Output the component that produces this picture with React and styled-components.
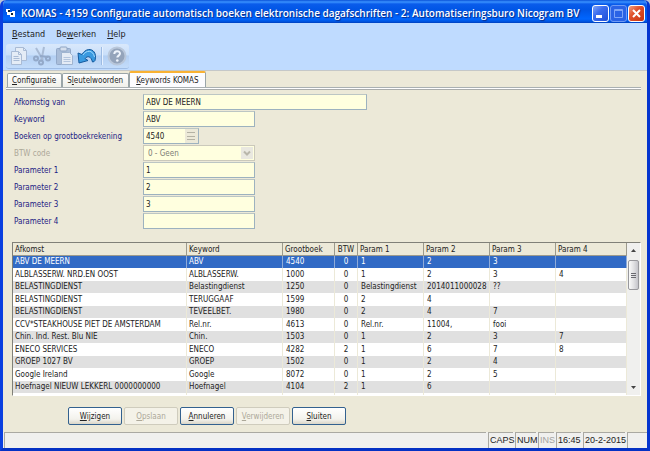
import React, { useState } from 'react';
import styled, { createGlobalStyle, css } from 'styled-components';

const ui = '"DejaVu Sans Condensed", "Noto Sans", sans-serif';

const GlobalStyle = createGlobalStyle`
* {
    box-sizing:border-box;
}

body {
    margin:0;
    background-color:#b9c4d8;
    font-family:${ui};
    font-size:8px;
    color:#222;
}

button, input, select {
    font:inherit;
    color:inherit;
    margin:0;
}
`;

const WindowStyled = styled.div`
display:flex;
flex-direction:column;
min-height:100vh;
border:3px solid #0a3fe0;
border-top:none;
border-bottom-color:#0531c4;
border-right-color:#0535cf;
border-radius:6px 6px 0 0;
background-color:#ece9d8;
overflow:hidden;
`;

const TitleBar = styled.header`
display:flex;
align-items:center;
height:23px;
margin:0 -3px;
padding:3px 5px 0 6px;
background:linear-gradient(#0a52d8 0, #3a92ff 2px, #0a5ceb 4px, #0055e5 10px, #0066ff 19px, #0050d8 22px, #003cb8 23px);
color:#fff;

h1 {
    flex:1;
    min-width:0;
    margin:0 0 0 6px;
    font-family:"Open Sans", "Noto Sans", sans-serif;
    font-size:10px;
    font-weight:600;
    line-height:16px;
    text-shadow:1px 1px 1px #0a2a80;
    white-space:nowrap;
}

> svg {
    flex:none;
}
`;

const CaptionButton = styled.button`
display:flex;
flex:none;
width:17px;
height:17px;
margin-left:1px;
padding:0;
border:1px solid ${props => (props.$faded ? '#6f9af5' : '#fff')};
border-radius:3px;
background:${props =>
    props.$close
        ? 'linear-gradient(135deg, #f0a080, #e0512c 40%, #c83410)'
        : props.$faded
            ? '#2a63e6'
            : 'linear-gradient(135deg, #7fa4f8, #3b6cee 40%, #2050d8)'};

svg {
    display:block;
    width:15px;
    height:15px;
}
`;

const MenuBar = styled.nav`
display:flex;
gap:11px;
padding:4px 9px 3px;
background-color:#bfdbff;
`;

const MenuItem = styled.button`
padding:0;
border:none;
background:none;
font-size:9px;
line-height:14px;
`;

const ToolBarRow = styled.div`
display:flex;
padding:0 3px 1px;
background-color:#bfdbff;
border-bottom:1px solid #c5c8c8;
`;

const ToolBar = styled.div`
display:flex;
align-items:center;
height:25px;
width:123px;
padding:0 1px;
border-radius:3px;
background:linear-gradient(#d9e8fb, #c9dffa 45%, #b3cff3 50%, #c3dcfa);
border-bottom:1px solid #9fbde6;
`;

const ToolButton = styled.button`
display:flex;
padding:0;
width:23px;
height:22px;
border:none;
background:none;

svg {
    display:block;
    width:23px;
    height:22px;
}
`;

const ToolDivider = styled.span`
width:2px;
height:18px;
margin:0 2px;
border-left:1px solid #9dbbe3;
border-right:1px solid #e6f1ff;
`;

const TabList = styled.div`
display:flex;
align-items:flex-end;
height:16px;
padding-left:4px;
`;

const Tab = styled.button`
height:14px;
padding:0 5px 0 4px;
border:1px solid #9aa5a8;
border-bottom:none;
border-radius:2px 2px 0 0;
background:linear-gradient(#fff, #f0f0ea);
line-height:13px;
white-space:nowrap;

${props => props.$active && css`
height:16px;
padding:0 6px;
border-top:2px solid #f9b233;
background:#fcfcfe;
`}
`;

const Page = styled.main`
flex:1;
display:flex;
flex-direction:column;
margin:0 6px 0 3px;
border-top:1px solid #a9b0b2;
box-shadow:inset 0 1px #fff, inset 0 2px #a9acaa;
padding:6px 0 7px 6px;
`;

const Field = styled.div`
display:grid;
grid-template-columns:131px 1fr;
height:17px;

label {
    padding-left:2px;
    line-height:18px;
    color:${props => (props.$off ? '#aca899' : '#1b1b84')};
}
`;

const boxStyle = css`
height:16px;
border:1px solid #9db2bf;
border-top-color:#bcc6c4;
background-color:#ffffdf;
`;

const TextBox = styled.input`
${boxStyle}
width:${props => (props.$wide ? 224 : 112)}px;
padding:0 2px;
border-radius:0;
`;

const LookupBox = styled.div`
${boxStyle}
display:flex;
width:56px;

input {
    width:41px;
    padding:0 2px;
    border:none;
    background:none;
}

button {
    flex:1;
    padding:0;
    border:none;
    background-color:#ece9d8;
}

svg {
    display:block;
    width:13px;
    height:14px;
}
`;

const SelectBox = styled.div`
${boxStyle}
border-color:#cbc9bb;
display:flex;
align-items:center;
width:112px;
padding-right:1px;

select {
    flex:1;
    height:14px;
    padding:0 4px;
    border:none;
    appearance:none;
    background:none;
    color:#7d7d75;
    opacity:1;
}

svg {
    display:block;
    width:12px;
    height:12px;
    background-color:#e9e8e0;
}
`;

const GridFrame = styled.section`
flex:1;
display:flex;
margin-top:12px;
border-top:1px solid #808078;
border-left:1px solid #808078;
border-right:1px solid #fff;
border-bottom:1px solid #fff;
background-color:#fff;
`;

const GridTable = styled.table`
flex:1;
width:0;
table-layout:fixed;
border-collapse:separate;
border-spacing:0;

th, td {
    padding:0 2px;
    line-height:12px;
    font-weight:normal;
    text-align:left;
    white-space:nowrap;
    overflow:hidden;
    border-right:1px solid #ece9d8;
}

th {
    height:13px;
    padding-top:1px;
    line-height:11px;
    background-color:#ece9d8;
    border-right-color:#9c9a8c;
    border-bottom:1px solid #9c9a8c;
}

th:nth-child(4), td:nth-child(4) {
    text-align:center;
}
`;

const Row = styled.tr`
height:12px;

&:nth-child(even) {
    height:13px;
}

&:nth-child(odd) {
    background-color:#e0e0e0;
}

td:nth-child(n+5), td:nth-child(3) {
    padding-left:3px;
}

${props => props.$selected && css`
&& {
    background-color:#316ac5;
    color:#fff;
}

td {
    border-right-color:#8fabd8;
}
`}
`;

const FillRow = styled.tr`
background-color:#fff;

td {
    height:2px;
    line-height:0;
}
`;

const ScrollBar = styled.div`
display:flex;
flex-direction:column;
width:13px;
background-color:#f0f0ee;

button {
    height:15px;
    padding:0;
    border:none;
    background:none;
}

svg {
    display:block;
    width:13px;
    height:15px;
}
`;

const ScrollTrack = styled.div`
flex:1;
padding:2px 1px 0;
`;

const ScrollThumb = styled.div`
display:flex;
flex-direction:column;
justify-content:center;
gap:1px;
height:30px;
padding:0 2px;
border:1px solid #98989c;
border-radius:2px;
background:linear-gradient(90deg, #fafafa, #e2e2e4 50%, #c4c4ca);

i {
    height:1px;
    background-color:#6a6a70;
}
`;

const Actions = styled.div`
display:flex;
gap:2px;
padding:11px 0 0 56px;
`;

const ActionButton = styled.button`
width:54px;
height:18px;
padding:0;
border:1px solid #33618f;
border-radius:2px;
background:linear-gradient(#fff, #f3f2ec 70%, #dad6c8);

&:disabled {
    border-color:#cfccbd;
    background:#f4f2e8;
    color:#aca899;
}
`;

const StatusBar = styled.footer`
display:flex;
gap:2px;
padding-left:1px;
background-color:#f0f0ee;
font-family:"Liberation Sans", Arial, sans-serif;
font-size:9px;
`;

const StatusCell = styled.span`
flex:${props => (props.$grow ? '1' : 'none')};
width:${props => (props.$size ? props.$size + 'px' : 'auto')};
height:16px;
padding:0 1px;
border-top:1px solid #aaa9a2;
border-left:1px solid #aaa9a2;
line-height:14px;
color:${props => (props.$off ? '#a2a2a0' : '#222')};
white-space:nowrap;
`;

// "&" marks the mnemonic letter, as in the menu resources
function Caption ({ text }){
    const at = text.indexOf('&');
    if (at < 0) return text;
    return (
        <span>{text.slice(0, at)}<u>{text[at + 1]}</u>{text.slice(at + 2)}</span>
    )
}

const AppIcon = () => (
    <svg width="9" height="10" viewBox="0 0 9 10">
        <path d="M0 1h4v3h2v-1h3v6H4V7H1V4H0z" fill="#fff" />
        <path d="M2 2h2v2H2zM5 5h2v2H5z" fill="#123" />
    </svg>
)

const CopyIcon = () => (
    <svg viewBox="0 0 23 22">
        <g fill="#e4ecf6" stroke="#a9bbd5">
            <path d="M8.500 2.500h8l3 3v10h-11z" />
            <path d="M16.500 2.500v3h3" fill="none" />
            <path d="M4.500 6.500h7l3 3v10h-10z" />
            <path d="M11.500 6.500v3h3M6.500 11.500h5M6.500 13.500h6M6.500 15.500h6" fill="none" />
        </g>
    </svg>
)

const CutIcon = () => (
    <svg viewBox="0 0 23 22" fill="none" stroke="#93a9c9">
        <path d="M6 3l7 12M14 2l-3 15" stroke="#a9bbd5" strokeWidth="2" />
        <path d="M10 11l8 1" strokeWidth="2" />
        <circle cx="6" cy="13.500" r="2" strokeWidth="2" />
        <circle cx="11" cy="17.500" r="2" strokeWidth="2" />
        <circle cx="18" cy="13.500" r="2" strokeWidth="2" />
    </svg>
)

const PasteIcon = () => (
    <svg viewBox="0 0 23 22">
        <rect x="3.500" y="3.500" width="14" height="16" rx="1" fill="#a9bdd9" stroke="#93a9c9" />
        <rect x="7" y="2" width="7" height="4" rx="1" fill="#d5dfed" stroke="#8fa5c4" />
        <path d="M8.500 7.500h8l3 3v9h-11z" fill="#e4ebf5" stroke="#9fb4d0" />
        <path d="M10.500 12.500h7M10.500 14.500h7M10.500 16.500h7" stroke="#b4c5dd" />
    </svg>
)

const UndoIcon = () => (
    <svg viewBox="0 0 23 22">
        <path d="M2 8l1 10 9-2.500-3-2c2.500-3 6-2.500 7.500 3.500 1 0 2-.500 2.500-1.500C21 8 17 4 12.500 4.500 9.500 5 7.500 7 6 9.500z" fill="#3a9ae0" stroke="#155a9e" />
        <path d="M7 10c3-5 10-5.500 11.500 2" fill="none" stroke="#a4dcff" />
    </svg>
)

const HelpIcon = () => (
    <svg viewBox="0 0 23 22">
        <circle cx="12" cy="11" r="8.500" fill="#94a4bb" stroke="#b9c7da" strokeWidth="2" />
        <path d="M9.300 9c0-3.800 5.700-3.600 5.700-.400 0 2-2.700 2-2.700 4" fill="none" stroke="#eef4fc" strokeWidth="2" />
        <circle cx="12.300" cy="15.500" r="1.300" fill="#eef4fc" />
    </svg>
)

const tabs = ['&Configuratie', 'S&leutelwoorden', '&Keywords KOMAS'];

const columns = [
    ['Afkomst', 174],
    ['Keyword', 96],
    ['Grootboek', 52],
    ['BTW', 23],
    ['Param 1', 66],
    ['Param 2', 66],
    ['Param 3', 66],
    ['Param 4', null],
];

const rows = [
    ['ABV DE MEERN', 'ABV', '4540', '0', '1', '2', '3', ''],
    ['ALBLASSERW. NRD.EN OOST', 'ALBLASSERW.', '1000', '0', '1', '2', '3', '4'],
    ['BELASTINGDIENST', 'Belastingdienst', '1250', '0', 'Belastingdienst', '2014011000028', '??', ''],
    ['BELASTINGDIENST', 'TERUGGAAF', '1599', '0', '2', '4', '', ''],
    ['BELASTINGDIENST', 'TEVEELBET.', '1980', '0', '2', '4', '7', ''],
    ['CCV*STEAKHOUSE PIET DE AMSTERDAM', 'Rel.nr.', '4613', '0', 'Rel.nr.', '11004,', 'fooi', ''],
    ['Chin. Ind. Rest. Blu NIE', 'Chin.', '1503', '0', '1', '2', '3', '7'],
    ['ENECO SERVICES', 'ENECO', '4282', '2', '1', '6', '7', '8'],
    ['GROEP 1027 BV', 'GROEP', '1502', '0', '1', '2', '4', ''],
    ['Google Ireland', 'Google', '8072', '0', '1', '2', '5', ''],
    ['Hoefnagel NIEUW LEKKERL 0000000000', 'Hoefnagel', '4104', '2', '1', '6', '', ''],
];

const parameters = ['1', '2', '3', ''];

export default function App (){
    const [activeTab, setActiveTab] = useState(2);
    const [selected, setSelected] = useState(0);

    return (
        <WindowStyled>
            <GlobalStyle />
            <TitleBar>
                <AppIcon />
                <h1>KOMAS - 4159 Configuratie automatisch boeken elektronische dagafschriften - 2: Automatiseringsburo Nicogram BV</h1>
                <CaptionButton aria-label="Minimaliseren">
                    <svg viewBox="0 0 15 15"><path d="M3 9h6v3H3z" fill="#fff" /></svg>
                </CaptionButton>
                <CaptionButton $faded aria-label="Maximaliseren">
                    <svg viewBox="0 0 15 15"><path d="M3.500 3.500h8v8h-8zM3 4.500h9" fill="none" stroke="#7ea5f7" /></svg>
                </CaptionButton>
                <CaptionButton $close aria-label="Afsluiten">
                    <svg viewBox="0 0 15 15"><path d="M4 4l7 7M11 4l-7 7" stroke="#fff" strokeWidth="2" /></svg>
                </CaptionButton>
            </TitleBar>

            <MenuBar>
                <MenuItem><Caption text="&Bestand" /></MenuItem>
                <MenuItem><Caption text="Be&werken" /></MenuItem>
                <MenuItem><Caption text="&Help" /></MenuItem>
            </MenuBar>
            <ToolBarRow>
                <ToolBar>
                    <ToolButton aria-label="Kopiëren"><CopyIcon /></ToolButton>
                    <ToolButton aria-label="Knippen"><CutIcon /></ToolButton>
                    <ToolButton aria-label="Plakken"><PasteIcon /></ToolButton>
                    <ToolButton aria-label="Ongedaan maken"><UndoIcon /></ToolButton>
                    <ToolDivider />
                    <ToolButton aria-label="Help"><HelpIcon /></ToolButton>
                </ToolBar>
            </ToolBarRow>

            <TabList role="tablist">
                {tabs.map((tab, i) => (
                    <Tab key={tab} role="tab" aria-selected={i === activeTab} $active={i === activeTab} onClick={() => setActiveTab(i)}>
                        <Caption text={tab} />
                    </Tab>
                ))}
            </TabList>

            <Page>
                <Field>
                    <label htmlFor="afkomstig">Afkomstig van</label>
                    <TextBox id="afkomstig" $wide defaultValue="ABV DE MEERN" />
                </Field>
                <Field>
                    <label htmlFor="keyword">Keyword</label>
                    <TextBox id="keyword" defaultValue="ABV" />
                </Field>
                <Field>
                    <label htmlFor="grootboek">Boeken op grootboekrekening</label>
                    <LookupBox>
                        <input id="grootboek" defaultValue="4540" />
                        <button aria-label="Zoeken">
                            <svg viewBox="0 0 13 14"><path d="M2 3.500h8M2 7.500h8M2 10.500h8" stroke="#b4b2a4" /></svg>
                        </button>
                    </LookupBox>
                </Field>
                <Field $off>
                    <label htmlFor="btw">BTW code</label>
                    <SelectBox>
                        <select id="btw" disabled>
                            <option>0 - Geen</option>
                        </select>
                        <svg viewBox="0 0 12 12"><path d="M3 4.500l3 3 3-3" fill="none" stroke="#b9b7ab" strokeWidth="2" /></svg>
                    </SelectBox>
                </Field>
                {parameters.map((value, i) => (
                    <Field key={i}>
                        <label htmlFor={'param' + i}>Parameter {i + 1}</label>
                        <TextBox id={'param' + i} defaultValue={value} />
                    </Field>
                ))}

                <GridFrame>
                    <GridTable>
                        <colgroup>
                            {columns.map(([name, width]) => <col key={name} width={width || undefined} />)}
                        </colgroup>
                        <thead>
                            <tr>
                                {columns.map(([name]) => <th key={name}>{name}</th>)}
                            </tr>
                        </thead>
                        <tbody>
                            {rows.map((row, i) => (
                                <Row key={i} $selected={i === selected} onClick={() => setSelected(i)}>
                                    {row.map((cell, c) => <td key={c}>{cell}</td>)}
                                </Row>
                            ))}
                            <FillRow>
                                {columns.map(([name]) => <td key={name} />)}
                            </FillRow>
                        </tbody>
                    </GridTable>
                    <ScrollBar>
                        <button aria-label="Omhoog">
                            <svg viewBox="0 0 13 15"><path d="M4 9l2.500-3L9 9z" fill="#444" /></svg>
                        </button>
                        <ScrollTrack>
                            <ScrollThumb><i /><i /><i /></ScrollThumb>
                        </ScrollTrack>
                        <button aria-label="Omlaag">
                            <svg viewBox="0 0 13 15"><path d="M4 6l2.500 3L9 6z" fill="#444" /></svg>
                        </button>
                    </ScrollBar>
                </GridFrame>

                <Actions>
                    <ActionButton><Caption text="&Wijzigen" /></ActionButton>
                    <ActionButton disabled><Caption text="&Opslaan" /></ActionButton>
                    <ActionButton><Caption text="&Annuleren" /></ActionButton>
                    <ActionButton disabled><Caption text="&Verwijderen" /></ActionButton>
                    <ActionButton><Caption text="&Sluiten" /></ActionButton>
                </Actions>
            </Page>

            <StatusBar>
                <StatusCell $grow />
                <StatusCell $size={25}>CAPS</StatusCell>
                <StatusCell $size={21}>NUM</StatusCell>
                <StatusCell $size={16} $off>INS</StatusCell>
                <StatusCell $size={25}>16:45</StatusCell>
                <StatusCell $size={42}>20-2-2015</StatusCell>
                <StatusCell $size={20} />
            </StatusBar>
        </WindowStyled>
    )
}
